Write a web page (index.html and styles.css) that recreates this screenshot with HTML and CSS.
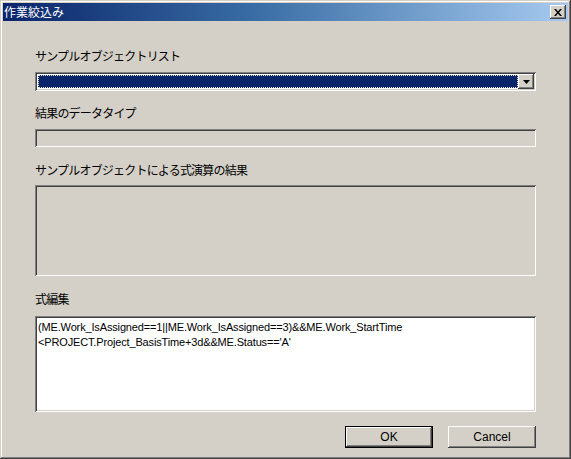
FILE: index.html
```html
<!DOCTYPE html>
<html lang="ja">
<head>
<meta charset="utf-8">
<title>作業絞込み</title>
<link rel="stylesheet" href="styles.css">
</head>
<body>
<div class="window">
  <div class="titlebar">
    <span class="title">作業絞込み</span>
    <span class="close"><svg width="8" height="7" viewBox="0 0 8 7"><path d="M0 0h2l2 2.5L6 0h2L5 3.5 8 7H6L4 4.5 2 7H0l3-3.5z" fill="#000"/></svg></span>
  </div>
  <div class="content">
    <div class="label l1">サンプルオブジェクトリスト</div>
    <div class="combo sunken">
      <div class="combo-sel"><div class="focus"></div></div>
      <div class="combo-btn"><svg width="7" height="4" viewBox="0 0 7 4"><path d="M0 0h7L3.5 4z" fill="#000"/></svg></div>
    </div>
    <div class="label l2">結果のデータタイプ</div>
    <div class="field sunken gray"></div>
    <div class="label l3">サンプルオブジェクトによる式演算の結果</div>
    <div class="result sunken gray"></div>
    <div class="label l4">式編集</div>
    <div class="edit sunken">(ME.Work_IsAssigned==1||ME.Work_IsAssigned==3)&amp;&amp;ME.Work_StartTime<br>&lt;PROJECT.Project_BasisTime+3d&amp;&amp;ME.Status=='A'</div>
    <div class="buttons">
      <div class="btn default"><span>OK</span></div>
      <div class="btn"><span>Cancel</span></div>
    </div>
  </div>
</div>
</body>
</html>
```
FILE: styles.css
```css
html, body {
  margin: 0;
  padding: 0;
  background: #d4d0c8;
}
.window {
  width: 571px;
  height: 459px;
  box-sizing: border-box;
  padding: 3px 3px 3px 3px;
  background: #d4d0c8;
  box-shadow: inset -1px -1px #404040, inset 1px 1px #d4d0c8, inset -2px -2px #808080, inset 2px 2px #ffffff;
  font-family: "Noto Sans CJK JP", "Liberation Sans", sans-serif;
  font-size: 12px;
  color: #000;
  display: flex;
  flex-direction: column;
}
.titlebar {
  height: 18px;
  background: linear-gradient(to right, #0a246a 0%, #3a6ea5 45%, #a6caf0 100%);
  display: flex;
  align-items: center;
  justify-content: space-between;
  padding: 0 2px 0 1px;
}
.title {
  color: #fff;
  font-size: 12px;
  line-height: 18px;
}
.close {
  width: 16px;
  height: 14px;
  box-sizing: border-box;
  background: #d4d0c8;
  box-shadow: inset -1px -1px #404040, inset 1px 1px #ffffff, inset -2px -2px #808080;
  display: flex;
  align-items: center;
  justify-content: center;
}
.content {
  flex: 1;
  display: flex;
  flex-direction: column;
  padding: 0 32px 0 32px;
}
.label {
  line-height: 14px;
  height: 14px;
  font-size: 12px;
  letter-spacing: -0.8px;
}
.l1 { margin-top: 28px; }
.l2 { margin-top: 15px; }
.l3 { margin-top: 16px; }
.l4 { margin-top: 16px; }
.sunken {
  box-sizing: border-box;
  box-shadow: inset 1px 1px #808080, inset -1px -1px #ffffff, inset 2px 2px #404040, inset -2px -2px #d4d0c8;
  padding: 2px;
}
.combo {
  margin-top: 9px;
  height: 19px;
  display: flex;
  background: #fff;
}
.combo-sel {
  flex: 1;
  margin: 1px 0 1px 1px;
  background: #0a246a;
  position: relative;
}
.focus {
  position: absolute;
  inset: 0;
  border: 1px dotted #e8e4c8;
}
.combo-btn {
  width: 16px;
  background: #d4d0c8;
  box-shadow: inset -1px -1px #404040, inset 1px 1px #ffffff, inset -2px -2px #808080;
  display: flex;
  align-items: center;
  justify-content: center;
}
.gray { background: #d4d0c8; }
.field {
  margin-top: 9px;
  height: 18px;
}
.result {
  margin-top: 8px;
  height: 91px;
}
.edit {
  margin-top: 10px;
  height: 96px;
  background: #fff;
  font-family: "Liberation Sans", "Noto Sans CJK JP", sans-serif;
  font-size: 11px;
  line-height: 15px;
  padding: 4px 3px;
  letter-spacing: -0.15px;
}
.buttons {
  margin-top: 14px;
  display: flex;
  justify-content: flex-end;
  gap: 15px;
}
.btn {
  width: 88px;
  height: 22px;
  box-sizing: border-box;
  background: #d4d0c8;
  box-shadow: inset -1px -1px #404040, inset 1px 1px #ffffff, inset -2px -2px #808080;
  display: flex;
  align-items: center;
  justify-content: center;
  font-family: "Liberation Sans", sans-serif;
  font-size: 12px;
}
.btn.default {
  box-shadow: inset 0 0 0 1px #000, inset -2px -2px #404040, inset 2px 2px #ffffff, inset -3px -3px #808080;
}
```
